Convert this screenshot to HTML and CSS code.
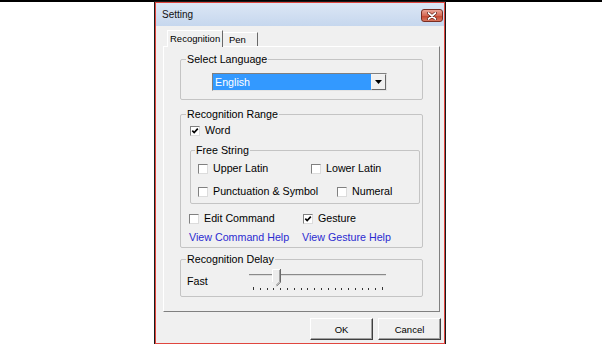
FILE: index.html
```html
<!DOCTYPE html>
<html lang="en">
<head>
    <meta charset="UTF-8">
    <meta name="viewport" content="width=device-width, initial-scale=1.0">
    <title>Setting</title>
    <link rel="stylesheet" href="styles.css">
</head>
<body>

    <div class="topline"></div>

    <div class="dialog">
        <!-- Title bar -->
        <div class="titlebar">
            <span class="title">Setting</span>
            <div class="close-btn">
                <svg width="10" height="8" viewBox="0 0 10 8">
                    <path d="M1.5 1 L8.5 7 M8.5 1 L1.5 7" stroke="#5a1a10" stroke-width="3" stroke-linecap="round"/>
                    <path d="M1.5 1 L8.5 7 M8.5 1 L1.5 7" stroke="#fff" stroke-width="1.7" stroke-linecap="round"/>
                </svg>
            </div>
        </div>

        <!-- Tabs -->
        <div class="tabs">
            <div class="tab tab-recog active">Recognition</div>
            <div class="tab tab-pen">Pen</div>
        </div>

        <div class="panel">
            <fieldset class="group group-lang">
                <legend>Select Language</legend>
                <div class="combo">
                    <span class="combo-value">English</span>
                    <span class="combo-arrow">
                        <svg width="7" height="4" viewBox="0 0 7 4"><polygon points="0,0 7,0 3.5,4" fill="#000"/></svg>
                    </span>
                </div>
            </fieldset>

            <fieldset class="group group-range">
                <legend>Recognition Range</legend>
                <label class="check row-word">
                    <span class="box"><svg width="8" height="8" viewBox="0 0 8 8"><path d="M1.3 3.6 L3.2 5.6 L6.8 1.6" stroke="#000" stroke-width="1.6" fill="none"/></svg></span>
                    Word
                </label>

                <fieldset class="group group-free">
                    <legend>Free String</legend>
                    <div class="row">
                        <label class="check w-upper"><span class="box"></span>Upper Latin</label>
                        <label class="check"><span class="box"></span>Lower Latin</label>
                    </div>
                    <div class="row row-second">
                        <label class="check w-punct"><span class="box"></span>Punctuation &amp; Symbol</label>
                        <label class="check"><span class="box"></span>Numeral</label>
                    </div>
                </fieldset>

                <div class="row row-cmd">
                    <label class="check w-cmd"><span class="box"></span>Edit Command</label>
                    <label class="check">
                        <span class="box"><svg width="8" height="8" viewBox="0 0 8 8"><path d="M1.3 3.6 L3.2 5.6 L6.8 1.6" stroke="#000" stroke-width="1.6" fill="none"/></svg></span>
                        Gesture
                    </label>
                </div>
                <div class="row row-links">
                    <a class="link w-link">View Command Help</a>
                    <a class="link">View Gesture Help</a>
                </div>
            </fieldset>

            <fieldset class="group group-delay">
                <legend>Recognition Delay</legend>
                <div class="slider-row">
                    <span class="slider-label">Fast</span>
                    <svg class="slider" width="137" height="24" viewBox="0 0 137 24">
                        <rect x="0" y="6" width="137" height="1" fill="#8a8a8a"/>
                        <rect x="0" y="7" width="137" height="1" fill="#dcdcdc"/>
                        <polygon points="23,1 31,1 31,14 27,18 23,14" fill="#ececec"/>
                        <path d="M23.5 14 V1.5 H30.5" stroke="#fff" fill="none"/>
                        <path d="M31.5 1 V14.2 L27.5 18.2" stroke="#696969" fill="none"/>
                        <path d="M30.5 2 V13.8 L27.3 17" stroke="#a0a0a0" fill="none"/>
                        <g fill="#333">
                            <rect x="4" y="19" width="1" height="3"/>
                            <rect x="11" y="20" width="1" height="2"/>
                            <rect x="18" y="20" width="1" height="2"/>
                            <rect x="24" y="20" width="1" height="2"/>
                            <rect x="31" y="20" width="1" height="2"/>
                            <rect x="38" y="20" width="1" height="2"/>
                            <rect x="45" y="20" width="1" height="2"/>
                            <rect x="52" y="20" width="1" height="2"/>
                            <rect x="58" y="20" width="1" height="2"/>
                            <rect x="65" y="20" width="1" height="2"/>
                            <rect x="72" y="20" width="1" height="2"/>
                            <rect x="79" y="20" width="1" height="2"/>
                            <rect x="86" y="20" width="1" height="2"/>
                            <rect x="92" y="20" width="1" height="2"/>
                            <rect x="99" y="20" width="1" height="2"/>
                            <rect x="106" y="20" width="1" height="2"/>
                            <rect x="113" y="20" width="1" height="2"/>
                            <rect x="119" y="20" width="1" height="2"/>
                            <rect x="126" y="20" width="1" height="2"/>
                            <rect x="133" y="19" width="1" height="3"/>
                        </g>
                    </svg>
                </div>
            </fieldset>
        </div>

        <div class="buttons">
            <button class="btn">OK</button>
            <button class="btn">Cancel</button>
        </div>
    </div>

</body>
</html>
```

FILE: styles.css
```css
body {
    margin: 0;
    background: #fff;
    font-family: "Liberation Sans", Arial, sans-serif;
    font-size: 10.7px;
    line-height: 13px;
    color: #000;
}

.topline {
    height: 2px;
    background: #000;
}

/* Dialog window */
.dialog {
    margin-left: 155px;
    width: 290px;
    height: 342px;
    box-sizing: border-box;
    border: 1px solid #e0463f;
    box-shadow: 0 0 0 1px #1a1a1a;
    background: #f0f0f0;
}

.titlebar {
    height: 23px;
    display: flex;
    align-items: center;
    justify-content: space-between;
    padding: 0 1px 0 6px;
    background: linear-gradient(#dce7f5, #c6d7ee);
}

.title {
    font-size: 10px;
    color: #111;
}

.close-btn {
    width: 22px;
    height: 13px;
    margin-top: 2px;
    box-sizing: border-box;
    border: 1px solid #7a2d22;
    border-radius: 3px;
    background: linear-gradient(#eaa597, #d56a55 50%, #c2432c 51%, #d8765f);
    display: flex;
    align-items: center;
    justify-content: center;
}

/* Tabs */
.tabs {
    display: flex;
    align-items: flex-end;
    height: 16px;
    margin: 4px 0 0 11px;
}

.tab {
    height: 14px;
    box-sizing: border-box;
    border-top: 1px solid #fff;
    border-right: 1px solid #696969;
    font-size: 9.5px;
    line-height: 13px;
    background: #f0f0f0;
}

.tab.active {
    height: 17px;
    margin-bottom: -1px;
    position: relative;
    z-index: 1;
    border-left: 1px solid #fff;
    line-height: 15px;
}

.tab-recog {
    width: 56px;
    padding-left: 2px;
}

.tab-pen {
    width: 35px;
    padding-left: 6px;
}

.panel {
    margin-left: 7px;
    width: 277px;
    box-sizing: border-box;
    border: 1px solid;
    border-color: #fff #808080 #808080 #fff;
    padding: 6px 16px 14px;
}

/* Group boxes */
.group {
    margin: 0;
    padding: 0 5px;
    min-width: 0;
    border: 1px solid #c4c4c4;
    border-radius: 2px;
}

.group legend {
    padding: 0 1px;
    line-height: 13px;
}

.group-lang {
    padding-top: 7px;
    padding-bottom: 8px;
}

.combo {
    margin-left: 26px;
    width: 175px;
    height: 18px;
    box-sizing: border-box;
    display: flex;
    border: 1px solid;
    border-color: #7f7f7f #e3e3e3 #e3e3e3 #7f7f7f;
    background: #fff;
}

.combo-value {
    flex: 1;
    background: #3399ff;
    color: #fff;
    padding-left: 2px;
    line-height: 16px;
}

.combo-arrow {
    width: 15px;
    box-sizing: border-box;
    border: 1px solid;
    border-color: #f4f4f4 #696969 #696969 #f4f4f4;
    background: #f0f0f0;
    display: flex;
    align-items: center;
    justify-content: center;
}

.group-range {
    margin-top: 8px;
    padding-top: 3px;
    padding-bottom: 3px;
}

.check {
    display: flex;
    align-items: center;
    height: 13px;
}

.box {
    width: 10px;
    height: 10px;
    box-sizing: border-box;
    border: 1px solid;
    border-color: #808080 #dcdcdc #dcdcdc #808080;
    background: #fff;
    margin-right: 5px;
    display: flex;
}

.row-word {
    margin-left: 4px;
}

.group-free {
    margin: 7px 0 0 4px;
    width: 230px;
    box-sizing: border-box;
    padding: 5px 4px 5px;
}

.row {
    display: flex;
    margin-left: 3px;
}

.row-second {
    margin-top: 10px;
}

.w-upper {
    width: 113px;
}

.w-punct {
    width: 139px;
}

.row-cmd {
    margin-top: 8px;
}

.w-cmd {
    width: 114px;
}

.row-links {
    margin-top: 6px;
}

.link {
    color: #2b2bd0;
    height: 13px;
}

.w-link {
    width: 113px;
}

.group-delay {
    margin-top: 5px;
    padding-top: 2px;
    padding-bottom: 4px;
}

.slider-row {
    display: flex;
    align-items: flex-start;
}

.slider-label {
    width: 62px;
    margin: 7px 0 0 1px;
}

.slider {
    display: block;
}

/* Dialog buttons */
.buttons {
    display: flex;
    justify-content: flex-end;
    gap: 5px;
    margin-top: 6px;
    padding-right: 3px;
}

.btn {
    width: 63px;
    height: 22px;
    padding: 0;
    font-family: inherit;
    font-size: 9.5px;
    color: #000;
    background: #f0f0f0;
    border: 1px solid;
    border-color: #fff #404040 #404040 #fff;
    box-shadow: inset -1px -1px 0 #a0a0a0;
}
```
